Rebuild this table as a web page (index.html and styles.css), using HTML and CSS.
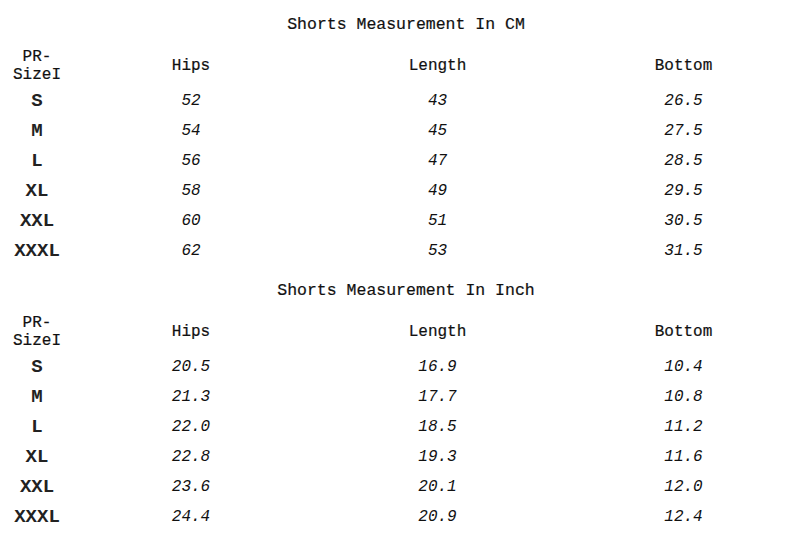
FILE: index.html
```html
<!DOCTYPE html>
<html>
<head>
<meta charset="utf-8">
<link rel="stylesheet" href="styles.css">
</head>
<body>
<section class="chart">
  <h2 class="title">Shorts Measurement In CM</h2>
  <div class="grid">
    <div class="hd size-hd"><span class="ln">PR-</span><span class="ln">SizeI</span></div><div class="hd">Hips</div><div class="hd">Length</div><div class="hd">Bottom</div>
    <div class="sz">S</div><div class="num">52</div><div class="num">43</div><div class="num">26.5</div>
    <div class="sz">M</div><div class="num">54</div><div class="num">45</div><div class="num">27.5</div>
    <div class="sz">L</div><div class="num">56</div><div class="num">47</div><div class="num">28.5</div>
    <div class="sz">XL</div><div class="num">58</div><div class="num">49</div><div class="num">29.5</div>
    <div class="sz">XXL</div><div class="num">60</div><div class="num">51</div><div class="num">30.5</div>
    <div class="sz">XXXL</div><div class="num">62</div><div class="num">53</div><div class="num">31.5</div>
  </div>
</section>
<section class="chart">
  <h2 class="title">Shorts Measurement In Inch</h2>
  <div class="grid">
    <div class="hd size-hd"><span class="ln">PR-</span><span class="ln">SizeI</span></div><div class="hd">Hips</div><div class="hd">Length</div><div class="hd">Bottom</div>
    <div class="sz">S</div><div class="num">20.5</div><div class="num">16.9</div><div class="num">10.4</div>
    <div class="sz">M</div><div class="num">21.3</div><div class="num">17.7</div><div class="num">10.8</div>
    <div class="sz">L</div><div class="num">22.0</div><div class="num">18.5</div><div class="num">11.2</div>
    <div class="sz">XL</div><div class="num">22.8</div><div class="num">19.3</div><div class="num">11.6</div>
    <div class="sz">XXL</div><div class="num">23.6</div><div class="num">20.1</div><div class="num">12.0</div>
    <div class="sz">XXXL</div><div class="num">24.4</div><div class="num">20.9</div><div class="num">12.4</div>
  </div>
</section>
</body>
</html>
```
FILE: styles.css
```css
html, body {
  margin: 0;
  padding: 0;
  background: #ffffff;
}
body {
  width: 812px;
  height: 537px;
  overflow: hidden;
  font-family: "Liberation Mono", "Courier New", monospace;
  font-size: 16px;
  color: #111;
  padding-top: 15px;
  box-sizing: border-box;
}
.chart {
  margin-bottom: 15px;
}
.title {
  margin: 0;
  font-size: 16.5px;
  font-weight: normal;
  line-height: 20px;
  height: 20px;
  text-align: center;
  -webkit-text-stroke: 0.2px #111;
}
.grid {
  margin-top: 10px;
  display: grid;
  grid-template-columns: 74px 234px 259px 233px;
  grid-template-rows: 41px repeat(6, 30px);
  align-items: center;
  justify-items: center;
}
.hd {
  line-height: 16px;
  text-align: center;
  -webkit-text-stroke: 0.2px #111;
}
.size-hd {
  display: flex;
  flex-direction: column;
  align-items: center;
}
.ln {
  display: block;
  line-height: 18px;
}
.sz {
  font-weight: bold;
  font-size: 19px;
  line-height: 22px;
  color: #222;
}
.num {
  font-style: italic;
  line-height: 20px;
}
```
